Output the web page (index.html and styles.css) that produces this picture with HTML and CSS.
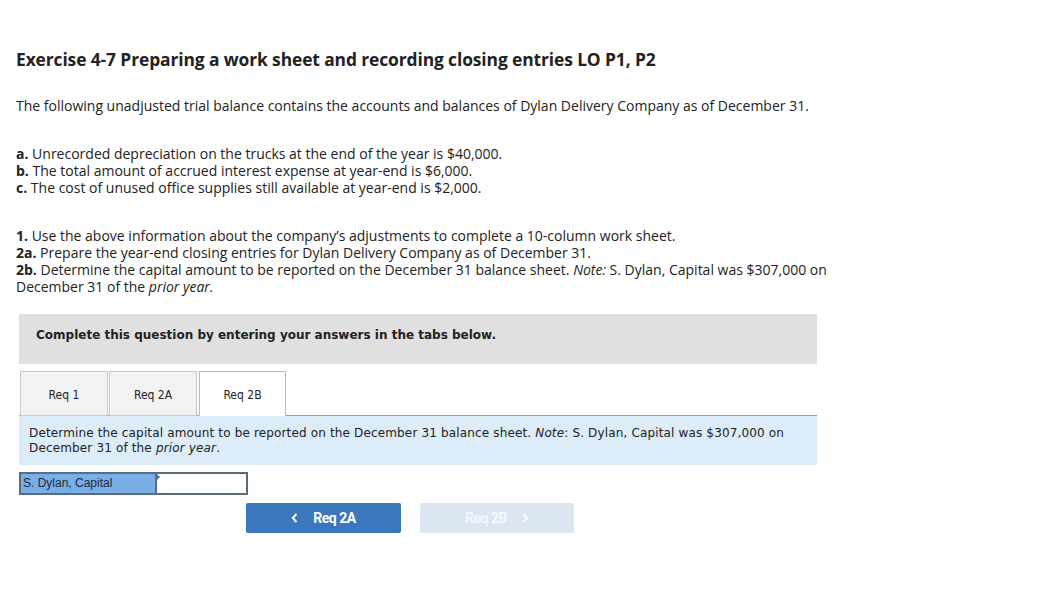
FILE: index.html
```html
<!DOCTYPE html>
<html>
<head>
<meta charset="utf-8">
<link rel="stylesheet" href="styles.css">
</head>
<body>
<div class="page">
  <h1 class="title">Exercise 4-7 Preparing a work sheet and recording closing entries LO P1, P2</h1>
  <p class="intro">The following unadjusted trial balance contains the accounts and balances of Dylan Delivery Company as of December 31.</p>
  <div class="adj">
    <div><b>a.</b> Unrecorded depreciation on the trucks at the end of the year is $40,000.</div>
    <div><b>b.</b> The total amount of accrued interest expense at year-end is $6,000.</div>
    <div><b>c.</b> The cost of unused office supplies still available at year-end is $2,000.</div>
  </div>
  <div class="reqs">
    <div><b>1.</b> Use the above information about the company’s adjustments to complete a 10-column work sheet.</div>
    <div><b>2a.</b> Prepare the year-end closing entries for Dylan Delivery Company as of December 31.</div>
    <div><b>2b.</b> Determine the capital amount to be reported on the December 31 balance sheet. <i>Note:</i> S. Dylan, Capital was $307,000 on December 31 of the <i>prior year.</i></div>
  </div>
  <div class="panel">
    <div class="instr">Complete this question by entering your answers in the tabs below.</div>
    <div class="tabs">
      <div class="tab">Req 1</div>
      <div class="tab">Req 2A</div>
      <div class="tab active">Req 2B</div>
    </div>
    <div class="prompt">Determine the capital amount to be reported on the December 31 balance sheet. <i>Note</i>: S. Dylan, Capital was $307,000 on December 31 of the <i>prior year</i>.</div>
    <div class="answer">
      <div class="label">S. Dylan, Capital</div>
      <div class="field"><span class="caret"></span></div>
    </div>
    <div class="nav">
      <div class="btn prev"><svg class="chev" width="7" height="10" viewBox="0 0 7 10"><path d="M5.5 1 L1.8 5 L5.5 9" fill="none" stroke="#ffffff" stroke-width="2"/></svg><span>Req 2A</span></div>
      <div class="btn next"><span>Req 2B</span><svg class="chev" width="7" height="10" viewBox="0 0 7 10"><path d="M1.5 1 L5.2 5 L1.5 9" fill="none" stroke="#f4f8fc" stroke-width="2"/></svg></div>
    </div>
  </div>
</div>
</body>
</html>
```
FILE: styles.css
```css
html, body {
  margin: 0;
  padding: 0;
  background: #ffffff;
}
.page {
  padding: 0 0 0 16px;
  font-family: "Open Sans", "Lato", sans-serif;
  color: #222;
  width: 830px;
}
.title {
  margin: 48px 0 0 0;
  font-size: 17.4px;
  line-height: 22px;
  font-weight: 700;
  color: #222;
  letter-spacing: -0.1px;
}
.intro {
  margin: 27px 0 0 0;
  font-size: 14px;
  line-height: 17px;
}
.adj {
  margin-top: 31px;
  font-size: 14px;
  line-height: 17px;
}
.reqs {
  margin-top: 31px;
  font-size: 14px;
  line-height: 17px;
}
.adj b, .reqs b {
  font-weight: 700;
}
.reqs b, .reqs i, .adj b, .prompt i {
  display: inline-block;
}
.panel {
  margin: 19px 0 0 3px;
  width: 798px;
  font-family: "DejaVu Sans", Verdana, sans-serif;
}
.instr {
  background: #e0e0e0;
  height: 50px;
  box-sizing: border-box;
  padding: 14px 0 0 17px;
  font-size: 12px;
  font-weight: bold;
  color: #222;
}
.tabs {
  margin-top: 7px;
  display: flex;
  border-bottom: 1px solid #9a9a9a;
  height: 44px;
  font-family: "DejaVu Sans Condensed", "DejaVu Sans", sans-serif;
}
.tab {
  box-sizing: border-box;
  height: 45px;
  width: 88px;
  margin-left: 1px;
  border: 1px solid #c8c8c8;
  background: #f2f2f2;
  display: flex;
  align-items: center;
  justify-content: center;
  font-size: 12px;
  color: #222;
  padding-top: 3px;
}
.tab.active {
  margin-left: 2px;
  width: 87px;
  background: #ffffff;
  border-color: #b8b8b8;
  border-bottom-color: #ffffff;
}
.prompt {
  background: #dcecf9;
  padding: 10px 10px 9px 10px;
  font-size: 12px;
  line-height: 15px;
  letter-spacing: 0.15px;
  color: #222;
}
.answer {
  margin-top: 7px;
  display: flex;
  height: 23px;
  width: 229px;
  box-sizing: border-box;
  border: 2px solid #5b6b82;
  font-family: "Liberation Sans", Arial, sans-serif;
}
.label {
  width: 132px;
  background: #7aaee6;
  border-right: 2px solid #5b6b82;
  font-size: 12px;
  line-height: 19px;
  padding-left: 2px;
  color: #1e2a3a;
}
.field {
  flex: 1;
  background: #fff;
  position: relative;
}
.caret {
  position: absolute;
  left: 0;
  top: 0;
  width: 0;
  height: 0;
  border-top: 3px solid transparent;
  border-bottom: 3px solid transparent;
  border-left: 3px solid #4a76b0;
}
.nav {
  margin: 8px 0 0 227px;
  display: flex;
  gap: 19px;
  font-family: "Roboto", "Liberation Sans", sans-serif;
}
.btn {
  width: 155px;
  height: 30px;
  display: flex;
  align-items: center;
  justify-content: center;
  font-size: 14px;
  font-weight: bold;
  letter-spacing: -0.5px;
  border-radius: 2px;
  gap: 15px;
}
.prev {
  background: #3a77bd;
  color: #ffffff;
}
.next {
  background: #dce6f2;
  color: #f4f8fc;
  width: 154px;
}
```
